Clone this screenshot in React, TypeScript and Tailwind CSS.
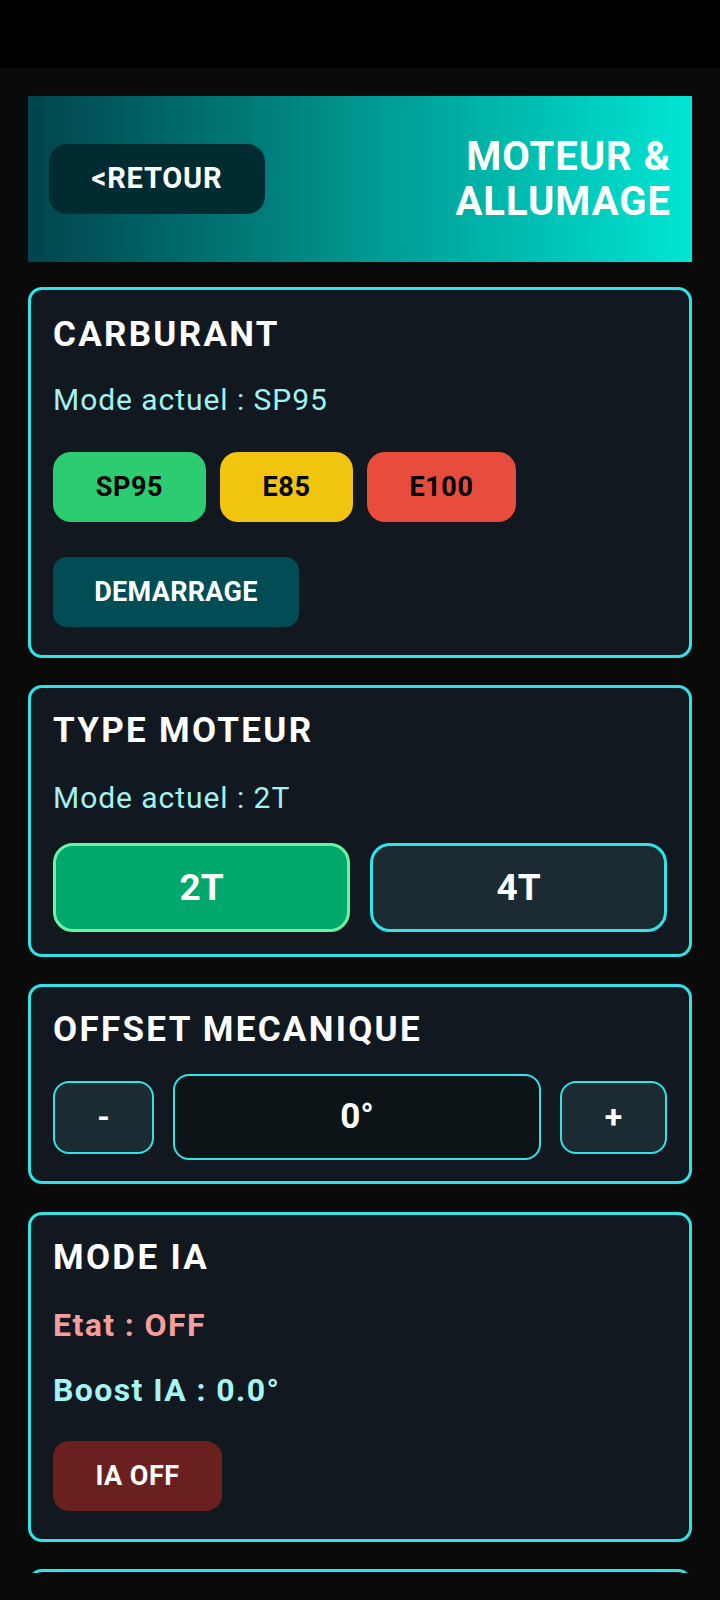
import React from "react";

const font = { fontFamily: "Roboto, 'Noto Sans', sans-serif" };

const Card = ({
  className = "",
  children,
}: {
  className?: string;
  children: React.ReactNode;
}) => (
  <div
    className={`border-[3px] border-[#2fe3e6] rounded-[14px] bg-[#111820] px-[22px] ${className}`}
  >
    {children}
  </div>
);

const Title = ({ children }: { children: React.ReactNode }) => (
  <h2 className="text-[35px] leading-[42px] font-bold text-white tracking-[2.3px]">
    {children}
  </h2>
);

const App = () => {
  return (
    <div
      className="w-[720px] h-[1600px] bg-[#0a0a0a] overflow-hidden"
      style={font}
    >
      <div className="h-[68px] bg-black" />

      <div className="h-[1505px] overflow-hidden px-[28px] pt-[28px] flex flex-col">
        {/* header */}
        <div className="h-[166px] shrink-0 flex items-center justify-between px-[21px] bg-gradient-to-r from-[#00454c] via-[#00968f] to-[#00e6d4]">
          <button className="w-[216px] h-[70px] rounded-[18px] bg-[#002b30] text-white text-[29px] font-bold tracking-[0.8px]">
            &lt;RETOUR
          </button>
          <h1 className="text-right text-white font-bold text-[40px] leading-[45px] tracking-[1px]">
            MOTEUR &amp;
            <br />
            ALLUMAGE
          </h1>
        </div>

        {/* carburant */}
        <Card className="mt-[25px] pt-[24px] pb-[28px] shrink-0">
          <Title>CARBURANT</Title>
          <p className="mt-[26px] text-[30px] leading-[36px] text-[#a3f2f0] tracking-[0.95px]">
            Mode actuel : SP95
          </p>
          <div className="mt-[34px] flex gap-[14px]">
            <button className="w-[153px] h-[70px] rounded-[18px] bg-[#2ecc71] text-black text-[27px] font-bold tracking-[0.6px]">
              SP95
            </button>
            <button className="w-[133px] h-[70px] rounded-[18px] bg-[#f1c40f] text-black text-[27px] font-bold tracking-[0.6px]">
              E85
            </button>
            <button className="w-[149px] h-[70px] rounded-[18px] bg-[#e74c3c] text-black text-[27px] font-bold tracking-[0.6px]">
              E100
            </button>
          </div>
          <button className="mt-[35px] w-[246px] h-[70px] rounded-[14px] bg-[#004d55] text-white text-[27px] font-bold tracking-[0.3px]">
            DEMARRAGE
          </button>
        </Card>

        {/* type moteur */}
        <Card className="mt-[27px] pt-[22px] pb-[22px] shrink-0">
          <Title>TYPE MOTEUR</Title>
          <p className="mt-[28px] text-[30px] leading-[36px] text-[#a3f2f0] tracking-[0.95px]">
            Mode actuel : 2T
          </p>
          <div className="mt-[27px] flex gap-[20px]">
            <button className="flex-1 h-[89px] rounded-[20px] border-[3px] border-[#6ef3a2] bg-[#00a86b] text-white text-[37px] font-bold">
              2T
            </button>
            <button className="flex-1 h-[89px] rounded-[20px] border-[3px] border-[#2fe3e6] bg-[#1c2b31] text-white text-[37px] font-bold">
              4T
            </button>
          </div>
        </Card>

        {/* offset */}
        <Card className="mt-[27px] pt-[22px] pb-[21px] shrink-0">
          <Title>OFFSET MECANIQUE</Title>
          <div className="mt-[23px] flex items-center gap-[19px]">
            <button className="w-[101px] h-[73px] rounded-[16px] border-2 border-[#2fe3e6] bg-[#1c2b31] text-white text-[32px] font-bold">
              -
            </button>
            <div className="flex-1 h-[86px] rounded-[16px] border-2 border-[#2fe3e6] bg-[#0d1417] flex items-center justify-center text-white text-[35px] font-bold">
              0°
            </div>
            <button className="w-[107px] h-[73px] rounded-[16px] border-2 border-[#2fe3e6] bg-[#1c2b31] text-white text-[32px] font-bold">
              +
            </button>
          </div>
        </Card>

        {/* mode ia */}
        <Card className="mt-[28px] pt-[22px] pb-[28px] shrink-0">
          <Title>MODE IA</Title>
          <p className="mt-[27px] text-[32px] leading-[38px] font-bold text-[#f79d9b] tracking-[1.4px]">
            Etat : OFF
          </p>
          <p className="mt-[27px] text-[32px] leading-[38px] font-bold text-[#a6f5f4] tracking-[1.4px]">
            Boost IA : 0.0°
          </p>
          <button className="mt-[32px] w-[169px] h-[70px] rounded-[16px] bg-[#6b2020] text-white text-[27px] font-bold tracking-[0.5px]">
            IA OFF
          </button>
        </Card>

        {/* next card, cut off */}
        <Card className="mt-[27px] h-[200px] shrink-0">
          <Title>&nbsp;</Title>
        </Card>
      </div>
    </div>
  );
};

export default App;
